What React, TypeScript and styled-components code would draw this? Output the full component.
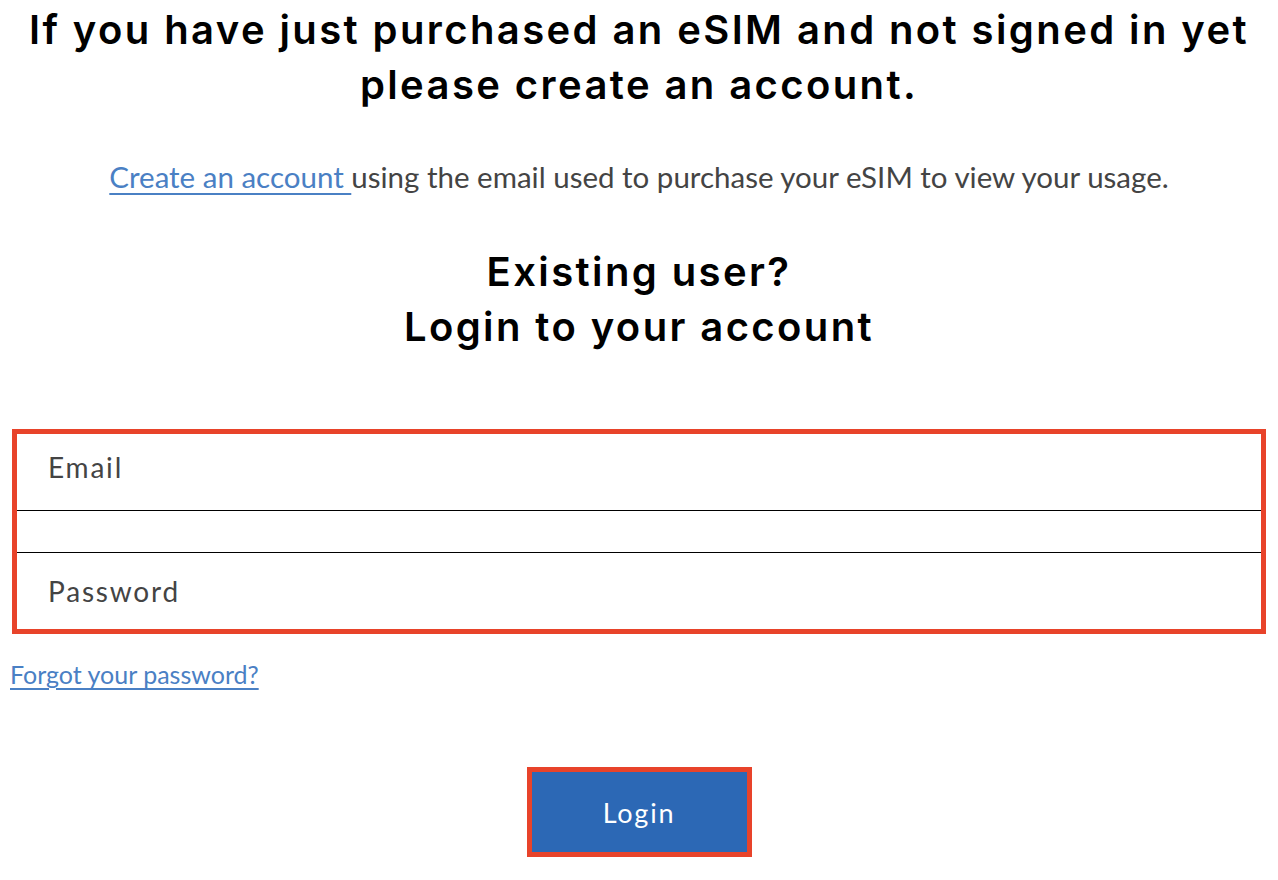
import React from 'react';
import styled, { createGlobalStyle } from 'styled-components';

const GlobalStyle = createGlobalStyle`
  body {
    margin: 0;
    background: #ffffff;
    font-family: 'Lato', 'Liberation Sans', sans-serif;
  }
`;

const Page = styled.div`
  padding: 0 12px;
  display: flex;
  flex-direction: column;
`;

const Title = styled.h1`
  margin: 2px 0 0;
  font-family: 'Inter', sans-serif;
  font-weight: 600;
  font-size: 40px;
  line-height: 55px;
  letter-spacing: 2.4px;
  color: #000;
  text-align: center;
`;

const Intro = styled.p`
  margin: 47px 0 0;
  font-family: 'Lato', sans-serif;
  font-size: 29.5px;
  line-height: 36px;
  color: #444;
  text-align: center;
`;

const Link = styled.a`
  color: #4a80c4;
  text-decoration: underline;
  text-underline-offset: 5px;
  text-decoration-thickness: 2px;
  cursor: pointer;
`;

const SubTitle = styled.h2`
  margin: 49px 0 0;
  font-family: 'Inter', sans-serif;
  font-weight: 600;
  font-size: 40px;
  line-height: 55px;
  letter-spacing: 2.4px;
  color: #000;
  text-align: center;
`;

const FormBox = styled.div`
  margin-top: 75px;
  border: 5px solid #e8432a;
  display: flex;
  flex-direction: column;
`;

const Field = styled.input<{ $top?: boolean }>`
  box-sizing: border-box;
  height: 77px;
  border: 0;
  ${({ $top }) => ($top ? 'border-top: 1px solid #000;' : 'border-bottom: 1px solid #000;')}
  padding: 0 31px ${({ $top }) => ($top ? '0' : '10px')};
  font-family: 'Lato', sans-serif;
  font-size: 28px;
  letter-spacing: 1.8px;
  color: #444;
  outline: none;
  &::placeholder {
    color: #444;
  }
`;

const Spacer = styled.div`
  height: 41px;
`;

const Forgot = styled(Link)`
  margin: 25px 0 0 -2px;
  align-self: flex-start;
  font-size: 25px;
  line-height: 30px;
  text-underline-offset: 4px;
`;

const ButtonWrap = styled.div`
  margin-top: 78px;
  display: flex;
  justify-content: center;
`;

const LoginButton = styled.button`
  width: 225px;
  height: 90px;
  border: 5px solid #e8432a;
  background: #2c68b5;
  color: #fff;
  font-family: 'Lato', sans-serif;
  font-size: 27px;
  letter-spacing: 1.8px;
  cursor: pointer;
`;

export default function App(): React.ReactElement {
  return (
    <>
      <GlobalStyle />
      <Page>
        <Title>
          If you have just purchased an eSIM and not signed in yet
          <br />
          please create an account.
        </Title>
        <Intro>
          <Link>Create an account </Link>using the email used to purchase your eSIM to view your usage.
        </Intro>
        <SubTitle>
          Existing user?
          <br />
          Login to your account
        </SubTitle>
        <FormBox>
          <Field placeholder='Email' type='email' />
          <Spacer />
          <Field $top placeholder='Password' type='password' />
        </FormBox>
        <Forgot>Forgot your password?</Forgot>
        <ButtonWrap>
          <LoginButton>Login</LoginButton>
        </ButtonWrap>
      </Page>
    </>
  );
}
